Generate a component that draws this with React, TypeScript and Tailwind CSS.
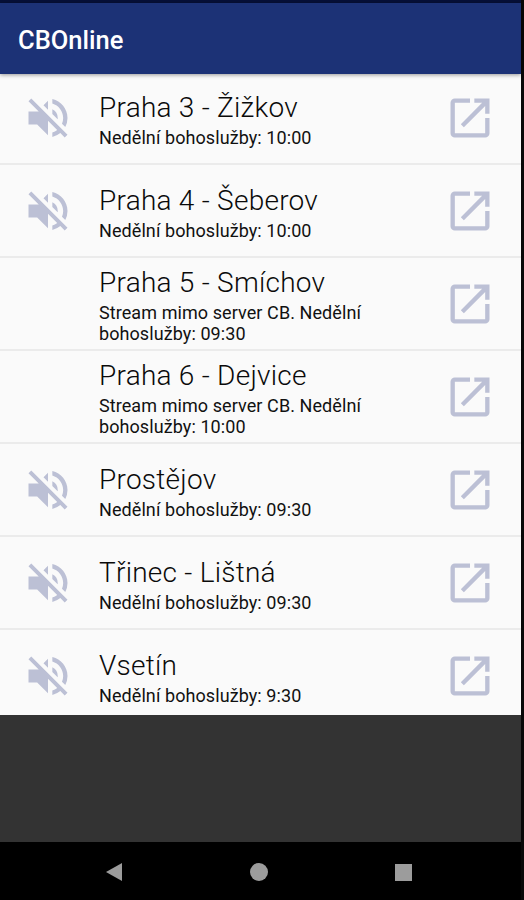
import React from "react";
import { MdOpenInNew, MdVolumeOff } from "react-icons/md";

type Stream = { name: string; info: string; muted: boolean };

const streams: Stream[] = [
  { name: "Praha 3 - Žižkov", info: "Nedělní bohoslužby: 10:00", muted: true },
  { name: "Praha 4 - Šeberov", info: "Nedělní bohoslužby: 10:00", muted: true },
  { name: "Praha 5 - Smíchov", info: "Stream mimo server CB. Nedělní bohoslužby: 09:30", muted: false },
  { name: "Praha 6 - Dejvice", info: "Stream mimo server CB. Nedělní bohoslužby: 10:00", muted: false },
  { name: "Prostějov", info: "Nedělní bohoslužby: 09:30", muted: true },
  { name: "Třinec - Lištná", info: "Nedělní bohoslužby: 09:30", muted: true },
  { name: "Vsetín", info: "Nedělní bohoslužby: 9:30", muted: true },
];

function StreamRow({ name, info, muted }: Stream) {
  return (
    <li className="flex h-[93px] shrink-0 items-center border-b-2 border-[#ebebeb] pl-[22px] pr-[25px]">
      <div className="w-[77px] shrink-0">
        {muted && <MdVolumeOff className="size-[52px] text-[#bcc0d5]" />}
      </div>
      <div className="w-[290px] shrink-0 pt-1 pb-px">
        <h2 className="text-[28px] leading-[33px] font-light tracking-[0.25px] whitespace-nowrap text-[#0a0a0a]">{name}</h2>
        <p className="pt-[3px] text-[18px] leading-[21px] tracking-[0.08px] text-[#111]">{info}</p>
      </div>
      <MdOpenInNew className="ml-auto size-[52px] shrink-0 text-[#bcc0d5]" />
    </li>
  );
}

export default function App() {
  return (
    <div className="h-[900px] w-[524px] overflow-hidden bg-[#080808] pr-[3px] font-['Roboto',sans-serif]">
      <div className="flex h-full flex-col">
        <div className="h-[3px] shrink-0 bg-[#061038]" />
        <header className="z-10 flex h-[71px] shrink-0 items-center bg-[#1c3276] pl-[18px] shadow-[0_1px_4px_rgba(0,0,0,0.4)]">
          <h1 className="pt-[4px] text-[25.5px] font-medium text-white">CBOnline</h1>
        </header>
        <ul className="-mt-[2px] flex h-[643px] shrink-0 flex-col overflow-hidden bg-[#fafafa]">
          {streams.map((s) => (
            <StreamRow key={s.name} {...s} />
          ))}
        </ul>
        <div className="h-[127px] shrink-0 bg-[#333]" />
        <nav className="flex flex-1 items-center bg-black pt-[2px] pl-[106px] text-[#9c9c9c]">
          <svg className="h-[18px] w-4" viewBox="0 0 16 18" fill="currentColor"><path d="M0 9 16 0v18Z" /></svg>
          <div className="ml-32 size-[18px] rounded-full bg-[#9c9c9c]" />
          <div className="ml-[127px] h-[17px] w-[17px] bg-[#9c9c9c]" />
        </nav>
      </div>
    </div>
  );
}
